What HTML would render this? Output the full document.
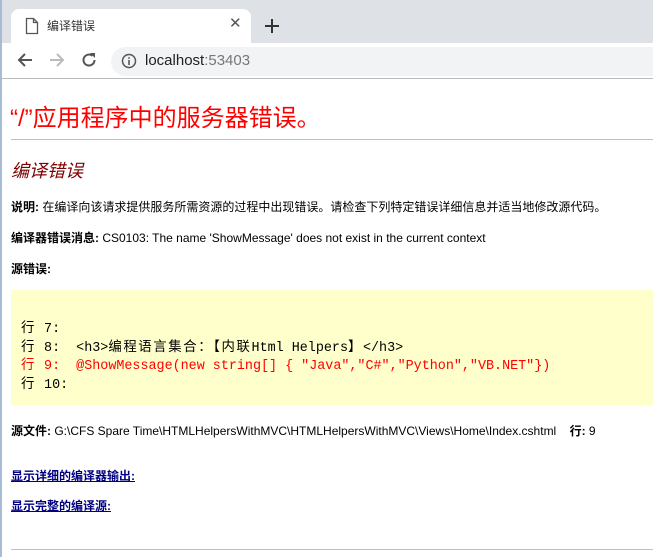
<!DOCTYPE html>
<html><head><meta charset="utf-8"><style>
*{margin:0;padding:0;box-sizing:border-box}
body{width:653px;height:557px;overflow:hidden;background:#fff;font-family:"Liberation Sans","Noto Sans CJK SC",sans-serif;position:relative}
.a{position:absolute;white-space:nowrap}
.lbl{font-size:12px;color:#000}
.lbl b{font-weight:bold}
.code{font-family:"Liberation Mono","Noto Sans CJK SC",monospace;font-size:13.4px;line-height:18.5px;white-space:pre}
.cj{letter-spacing:1.6px}
a{color:#000080;font-weight:bold;font-size:12px}
</style></head><body>
<div class="a" style="left:0;top:0;width:653px;height:43px;background:#dee1e6"></div>
<div class="a" style="left:11px;top:9px;width:240px;height:36px;background:#fff;border-radius:8px 8px 0 0"></div>
<svg class="a" style="left:25px;top:17px" width="14" height="18" viewBox="0 0 14 18"><path d="M1.5 1.5h7l4 4v11h-11z M8.5 1.5v4h4" fill="none" stroke="#555" stroke-width="1.3"/></svg>
<div class="a" style="left:47px;top:17px;font-size:12px;color:#333">编译错误</div>
<div class="a" style="left:229px;top:14px;font-size:15px;color:#555">✕</div>
<svg class="a" style="left:265px;top:19px" width="14" height="14"><path d="M7 0v14M0 7h14" stroke="#333" stroke-width="2"/></svg>
<div class="a" style="left:0;top:43px;width:653px;height:36px;background:#fff;border-bottom:1px solid #bbb"></div>
<svg class="a" style="left:16px;top:51px" width="18" height="18" viewBox="0 0 18 18"><path d="M16 9H3M9 3L3 9l6 6" fill="none" stroke="#555" stroke-width="2"/></svg>
<svg class="a" style="left:48px;top:51px" width="18" height="18" viewBox="0 0 18 18"><path d="M2 9h13M9 3l6 6-6 6" fill="none" stroke="#bbb" stroke-width="2"/></svg>
<svg class="a" style="left:80px;top:51px" width="18" height="18" viewBox="0 0 18 18"><path d="M14.5 9A5.5 5.5 0 1 1 12.5 4.8" fill="none" stroke="#555" stroke-width="2"/><path d="M10 2h5v5z" fill="#555"/></svg>
<div class="a" style="left:111px;top:47px;width:560px;height:29px;background:#f1f3f4;border-radius:15px"></div>
<svg class="a" style="left:121px;top:53px" width="16" height="16" viewBox="0 0 16 16"><circle cx="8" cy="8" r="6.5" fill="none" stroke="#555" stroke-width="1.5"/><path d="M8 7v5M8 4.3v1.4" stroke="#555" stroke-width="1.6"/></svg>
<div class="a" style="left:145px;top:52px;font-size:15px;color:#222">localhost<span style="color:#777">:53403</span></div>
<div class="a" style="left:0;top:0;width:2px;height:557px;background:#a9bcd6"></div>
<div class="a" style="left:10px;top:98px;font-size:24px;color:#f00">“/”应用程序中的服务器错误。</div>
<div class="a" style="left:11px;top:139px;width:642px;height:1px;background:#c0c0c0"></div>
<div class="a" style="left:11px;top:157px;font-size:18px;color:#800000;font-style:italic">编译错误</div>
<div class="a lbl" style="left:11px;top:198px"><b>说明:</b> 在编译向该请求提供服务所需资源的过程中出现错误。请检查下列特定错误详细信息并适当地修改源代码。</div>
<div class="a lbl" style="left:11px;top:229px"><b>编译器错误消息:</b> CS0103: The name 'ShowMessage' does not exist in the current context</div>
<div class="a lbl" style="left:11px;top:260px"><b>源错误:</b></div>
<div class="a" style="left:11px;top:290px;width:642px;height:115px;background:#ffffcc"></div>
<div class="a code" style="left:21px;top:321px"><span class="cj">行</span> 7:
<span class="cj">行</span> 8:  &lt;h3&gt;<span class="cj">编程语言集合：【内联</span>Html Helpers<span class="cj">】</span>&lt;/h3&gt;
<span style="color:#f00"><span class="cj">行</span> 9:  @ShowMessage(new string[] { "Java","C#","Python","VB.NET"})</span>
<span class="cj">行</span> 10:</div>
<div class="a lbl" style="left:11px;top:422px"><b>源文件:</b> G:\CFS Spare Time\HTMLHelpersWithMVC\HTMLHelpersWithMVC\Views\Home\Index.cshtml &nbsp;&nbsp; <b>行:</b> 9</div>
<div class="a" style="left:11px;top:467px"><a style="text-decoration:underline">显示详细的编译器输出:</a></div>
<div class="a" style="left:11px;top:497px"><a style="text-decoration:underline">显示完整的编译源:</a></div>
<div class="a" style="left:11px;top:549px;width:642px;height:1px;background:#c0c0c0"></div>
</body></html>
